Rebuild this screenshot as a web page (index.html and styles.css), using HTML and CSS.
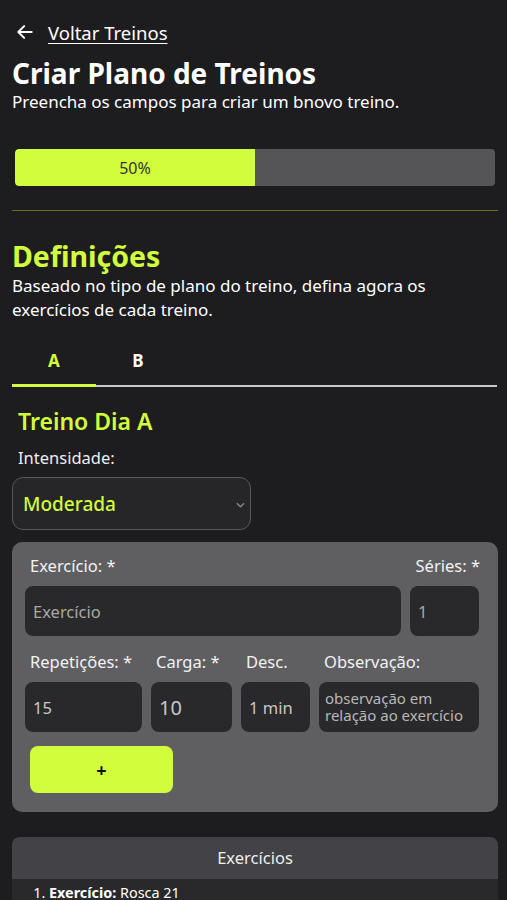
FILE: index.html
```html
<!DOCTYPE html>
<html lang="pt-BR">
<head>
<meta charset="utf-8">
<title>Criar Plano de Treinos</title>
<link rel="stylesheet" href="styles.css">
</head>
<body>
<main class="page">
  <a class="back" href="#">
    <svg class="back-icon" viewBox="0 0 24 24" width="20" height="20" aria-hidden="true"><path d="M20 12H5M11 5l-7 7 7 7" fill="none" stroke="#fff" stroke-width="2.4" stroke-linecap="round" stroke-linejoin="round"/></svg>
    <span class="back-text">Voltar Treinos</span>
  </a>
  <h1 class="title">Criar Plano de Treinos</h1>
  <p class="subtitle">Preencha os campos para criar um bnovo treino.</p>

  <div class="progress"><div class="progress-fill" style="width:50%">50%</div></div>

  <hr class="divider">

  <h2 class="section-title">Definições</h2>
  <p class="section-text">Baseado no tipo de plano do treino, defina agora os exercícios de cada treino.</p>

  <div class="tabs">
    <div class="tab active">A</div>
    <div class="tab">B</div>
  </div>

  <div class="day">
    <h3 class="day-title">Treino Dia A</h3>
    <label class="label">Intensidade:</label>
    <div class="select">
      <span>Moderada</span>
      <svg class="chev" viewBox="0 0 10 6" width="9" height="6"><path d="M1 1l4 4 4-4" fill="none" stroke="#8a8a8a" stroke-width="1.4"/></svg>
    </div>
  </div>

  <section class="card">
    <div class="row row1">
      <div class="field grow">
        <div class="flabel">Exercício: *</div>
        <div class="input placeholder">Exercício</div>
      </div>
      <div class="field series">
        <div class="flabel right">Séries: *</div>
        <div class="input placeholder">1</div>
      </div>
    </div>
    <div class="row row2">
      <div class="field rep">
        <div class="flabel">Repetições: *</div>
        <div class="input">15</div>
      </div>
      <div class="field carga">
        <div class="flabel">Carga: *</div>
        <div class="input big">10</div>
      </div>
      <div class="field desc">
        <div class="flabel">Desc.</div>
        <div class="input">1 min</div>
      </div>
      <div class="field obs">
        <div class="flabel">Observação:</div>
        <div class="input textarea">observação em relação ao exercício</div>
      </div>
    </div>
    <button class="add">+</button>
  </section>

  <section class="list">
    <div class="list-head">Exercícios</div>
    <ol class="list-body">
      <li><b>Exercício:</b> Rosca 21</li>
    </ol>
  </section>
</main>
</body>
</html>
```
FILE: styles.css
```css
html, body {
  margin: 0;
  padding: 0;
  background: #1d1c1f;
  color: #fff;
  font-family: "Noto Sans", "Open Sans", sans-serif;
}
.page {
  padding: 18px 9px 0 12px;
  display: flex;
  flex-direction: column;
}
.back {
  display: flex;
  align-items: center;
  gap: 13px;
  color: #fff;
  text-decoration: none;
  padding-left: 3px;
  height: 28px;
}
.back-text {
  font-size: 18.5px;
  text-decoration: underline;
  text-underline-offset: 3px;
}
.title {
  margin: 9px 0 0;
  font-size: 28px;
  font-weight: 700;
  line-height: 36px;
}
.subtitle {
  margin: 0;
  font-size: 17px;
  line-height: 22px;
}
.progress {
  margin: 36px 3px 0 3px;
  height: 37px;
  background: #555557;
  border-radius: 4px;
  overflow: hidden;
  display: flex;
}
.progress-fill {
  background: #d2fd3c;
  color: #333;
  font-size: 16px;
  display: flex;
  align-items: center;
  justify-content: center;
  border-radius: 4px 0 0 4px;
}
.divider {
  margin: 24px 0 0;
  border: 0;
  border-top: 1px solid #6a6c27;
  width: 100%;
}
.section-title {
  margin: 27px 0 0;
  color: #d2fd3c;
  font-size: 28.5px;
  font-weight: 700;
  line-height: 36px;
}
.section-text {
  margin: 0;
  font-size: 17px;
  line-height: 24px;
}
.tabs {
  margin-top: 20px;
  display: flex;
  border-bottom: 2px solid #c8c8c8;
  width: 485px;
}
.tab {
  width: 84px;
  text-align: center;
  font-size: 17px;
  font-weight: 700;
  height: 45px;
  line-height: 38px;
  margin-bottom: -2px;
  box-sizing: border-box;
}
.tab.active {
  color: #d2fd3c;
  border-bottom: 3px solid #d2fd3c;
}
.day {
  padding-left: 6px;
  display: flex;
  flex-direction: column;
}
.day-title {
  margin: 19px 0 0;
  color: #d2fd3c;
  font-size: 23px;
  font-weight: 600;
  line-height: 30px;
}
.label {
  margin-top: 11px;
  font-size: 16.5px;
  line-height: 22px;
  color: #eee;
}
.select {
  margin: 8px 0 0 -6px;
  width: 239px;
  height: 53px;
  box-sizing: border-box;
  border: 1px solid #58585a;
  border-radius: 11px;
  background: #262528;
  display: flex;
  align-items: center;
  justify-content: space-between;
  padding: 0 5px 0 10px;
  color: #d2fd3c;
  font-size: 19px;
  font-weight: 500;
}
.chev { margin-top: 2px; }
.card {
  margin-top: 12px;
  width: 486px;
  box-sizing: border-box;
  background: #5f5f61;
  border-radius: 10px;
  padding: 13px 19px 19px 13px;
  display: flex;
  flex-direction: column;
}
.row {
  display: flex;
  gap: 9px;
}
.row2 { margin-top: 15px; }
.field {
  display: flex;
  flex-direction: column;
}
.grow { flex: 1; }
.series { width: 69px; }
.rep { width: 117px; }
.carga { width: 81px; }
.desc { width: 69px; }
.obs { width: 160px; }
.flabel {
  font-size: 16.5px;
  line-height: 22px;
  padding-left: 5px;
  color: #f2f2f2;
  white-space: nowrap;
}
.flabel.right { text-align: right; padding-left: 0; padding-right: 0; margin-right: -1px; }
.input {
  margin-top: 9px;
  height: 50px;
  box-sizing: border-box;
  background: #29282b;
  border-radius: 8px;
  display: flex;
  align-items: center;
  padding-left: 8px;
  font-size: 16.5px;
  color: #c8c8c8;
}
.input.placeholder { color: #a8a8a8; }
.input.big { font-size: 20px; }
.input.textarea {
  font-size: 15px;
  line-height: 17px;
  padding: 0 4px 0 6px;
  color: #b8b8b8;
}
.add {
  margin: 14px 0 0 5px;
  width: 143px;
  height: 47px;
  border: 0;
  border-radius: 8px;
  background: #d2fd3c;
  color: #111;
  font-size: 18px;
  font-weight: 700;
  font-family: inherit;
}
.list {
  margin-top: 25px;
  width: 486px;
  border-radius: 8px 8px 0 0;
  overflow: hidden;
  background: #29282b;
}
.list-head {
  background: #434246;
  height: 42px;
  line-height: 42px;
  text-align: center;
  font-size: 16.5px;
  color: #eee;
}
.list-body {
  margin: 0;
  padding: 5px 0 20px 37px;
  font-size: 14.4px;
  line-height: 18px;
}
```
